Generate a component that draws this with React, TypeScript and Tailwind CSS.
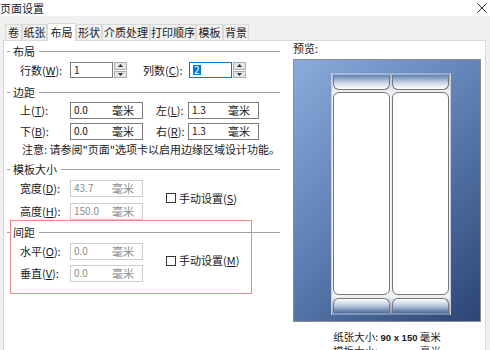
import React from 'react';

const tabs = [
  { name: '卷', w: 'w-[17px]' },
  { name: '纸张', w: 'w-[25px]' },
  { name: '布局', w: 'w-[29px]', active: true },
  { name: '形状', w: 'w-[26px]' },
  { name: '介质处理', w: 'w-[48px]' },
  { name: '打印顺序', w: 'w-[46px]' },
  { name: '模板', w: 'w-[27px]' },
  { name: '背景', w: 'w-[26px]' },
];

const Key: React.FC<{ label: string; k: string; w?: string }> = ({ label, k, w = 'w-[50px]' }) => (
  <span className={`${w} shrink-0`}>
    {label}(<span className="underline">{k}</span>):
  </span>
);

const SectionHead: React.FC<{ title: string; className?: string }> = ({ title, className = '' }) => (
  <div className={`flex items-center h-[14px] w-[276px] ${className}`}>
    <div className="ml-[3px] w-[3px] h-px bg-[#a0a0a0]" />
    <span className="ml-[3px]">{title}</span>
    <div className="flex-1 ml-[4px] h-px bg-[#a0a0a0]" />
  </div>
);

const UnitBox: React.FC<{ value: string; disabled?: boolean; w?: string; valW?: string }> = ({
  value,
  disabled,
  w = 'w-[73px]',
  valW = 'w-[38px]',
}) => (
  <div
    className={`${w} h-[17px] flex items-center pl-[3px] border ${
      disabled ? 'border-[#cccccc] text-[#8c8c8c]' : 'border-[#7a7a7a] text-[#111]'
    } bg-white`}
  >
    <span className={`${valW} text-[10px]`}>{value}</span>
    <span className={disabled ? 'text-[#8c8c8c]' : 'text-[#222]'}>毫米</span>
  </div>
);

const Spin: React.FC = () => (
  <div className="flex flex-col w-[13px] h-[16px] ml-px gap-px">
    <div className="flex-1 border border-[#adadad] bg-[#e5e5e5] flex items-center justify-center">
      <svg width="5" height="3" viewBox="0 0 5 3">
        <path d="M0 3 L2.5 0 L5 3Z" fill="#333" />
      </svg>
    </div>
    <div className="flex-1 border border-[#adadad] bg-[#e5e5e5] flex items-center justify-center">
      <svg width="5" height="3" viewBox="0 0 5 3">
        <path d="M0 0 L2.5 3 L5 0Z" fill="#333" />
      </svg>
    </div>
  </div>
);

const Check: React.FC<{ label: string; k: string }> = ({ label, k }) => (
  <div className="flex items-center ml-[23px]">
    <div className="w-[10px] h-[10px] border border-[#333] bg-white" />
    <span className="ml-[3px]">
      {label}(<span className="underline">{k}</span>)
    </span>
  </div>
);

const Labels: React.FC = () => (
  <div className="flex flex-col w-[57px]">
    <div className="h-[15px] rounded-b-[6px] border border-t-0 border-[#777] bg-[linear-gradient(to_bottom,#5f80b4,#c9d4e6_55%,#ffffff)]" />
    <div className="h-[203px] mt-[2px] rounded-[6px] border border-[#777] bg-white" />
    <div className="h-[15px] mt-[3px] rounded-t-[6px] border border-b-0 border-[#777] bg-[linear-gradient(to_bottom,#ffffff,#b8c6de_50%,#4b6a9c)]" />
  </div>
);

export default function App() {
  return (
    <div className="relative w-[490px] h-[350px] overflow-hidden flex flex-col bg-white text-[11px] leading-none text-[#1a1a1a] font-['Noto_Sans_CJK_SC','Noto_Sans',sans-serif]">
      {/* title bar */}
      <div className="h-[16px] shrink-0 flex items-center justify-between pr-[3px]">
        <span className="text-[11px]">页面设置</span>
        <svg width="10" height="10" viewBox="0 0 10 10">
          <path d="M0.5 0.5 L9.5 9.5 M9.5 0.5 L0.5 9.5" stroke="#222" strokeWidth="1" />
        </svg>
      </div>

      <div className="flex-1 flex flex-col bg-[#f0f0f0] pl-[3px] pr-[4px]">
        {/* tabs */}
        <div className="h-[24px] shrink-0 flex items-end pl-[2px]">
          {tabs.map((t) =>
            t.active ? (
              <div
                key={t.name}
                className={`${t.w} h-[18px] -mb-px z-10 bg-white border border-b-0 border-[#d9d9d9] flex items-center justify-center`}
              >
                {t.name}
              </div>
            ) : (
              <div
                key={t.name}
                className={`${t.w} h-[16px] bg-[#f0f0f0] border border-b-0 border-[#d9d9d9] flex items-center justify-center`}
              >
                {t.name}
              </div>
            )
          )}
        </div>

        {/* page */}
        <div className="flex-1 flex bg-white border-l border-t border-r border-[#d9d9d9]">
          {/* left column */}
          <div className="w-[289px] shrink-0 flex flex-col pt-[3px]">
            <SectionHead title="布局" />
            <div className="mt-[3px] h-[18px] flex items-center pl-[16px]">
              <Key label="行数" k="W" />
              <div className="w-[43px] h-[16px] border border-[#7a7a7a] flex items-center pl-[3px] text-[10px]">1</div>
              <Spin />
              <Key label="列数" k="C" w="w-[46px] ml-[16px]" />
              <div className="w-[43px] h-[16px] border border-[#0078d7] flex items-center pl-[3px] text-[10px]">
                <span className="bg-[#0078d7] text-white px-px">2</span>
              </div>
              <Spin />
            </div>

            <SectionHead title="边距" className="mt-[6px]" />
            <div className="mt-[2px] h-[18px] flex items-center pl-[16px]">
              <Key label="上" k="T" />
              <UnitBox value="0.0" />
              <Key label="左" k="L" w="w-[32px] ml-[13px]" />
              <UnitBox value="1.3" w="w-[71px]" valW="w-[36px]" />
            </div>
            <div className="mt-[3px] h-[18px] flex items-center pl-[16px]">
              <Key label="下" k="B" />
              <UnitBox value="0.0" />
              <Key label="右" k="R" w="w-[32px] ml-[13px]" />
              <UnitBox value="1.3" w="w-[71px]" valW="w-[36px]" />
            </div>
            <div className="mt-[2px] h-[14px] flex items-center pl-[18px]">
              注意: 请参阅"页面"选项卡以启用边缘区域设计功能。
            </div>

            <SectionHead title="模板大小" className="mt-[6px]" />
            <div className="flex items-center">
              <div className="flex flex-col pl-[16px]">
                <div className="mt-[3px] h-[18px] flex items-center">
                  <Key label="宽度" k="D" />
                  <UnitBox value="43.7" disabled />
                </div>
                <div className="mt-[5px] h-[18px] flex items-center">
                  <Key label="高度" k="H" />
                  <UnitBox value="150.0" disabled />
                </div>
              </div>
              <Check label="手动设置" k="S" />
            </div>

            <SectionHead title="间距" className="mt-[5px]" />
            <div className="flex items-center">
              <div className="flex flex-col pl-[16px]">
                <div className="mt-[3px] h-[18px] flex items-center">
                  <Key label="水平" k="O" />
                  <UnitBox value="0.0" disabled />
                </div>
                <div className="mt-[4px] h-[18px] flex items-center">
                  <Key label="垂直" k="V" />
                  <UnitBox value="0.0" disabled />
                </div>
              </div>
              <Check label="手动设置" k="M" />
            </div>
          </div>

          {/* right column: preview */}
          <div className="w-[188px] shrink-0 flex flex-col">
            <div className="h-[14px] flex items-center">预览:</div>
            <div className="mt-[4px] h-[263px] border border-[#8c8c8c] bg-[linear-gradient(135deg,#8aabdb,#5b7cb0_50%,#2b4574)] flex flex-col">
              <div className="mt-[13px] ml-[37px] w-[120px] px-px pt-[2px] pb-[2px] border-x border-[#c9ced8] bg-[linear-gradient(to_bottom,rgba(240,242,246,0.3),#eef0f4_18px,#eef0f4_calc(100%-18px),rgba(240,242,246,0.3))] flex justify-center gap-[2px]">
                <Labels />
                <Labels />
              </div>
            </div>
            <div className="mt-[9px] h-[13px] flex items-center justify-center text-[10.5px]">
              纸张大小:&nbsp;<span className="font-['Liberation_Sans'] font-bold text-[9.5px]">90 x 150</span>&nbsp;毫米
            </div>
            <div className="mt-[2px] h-[14px] flex items-start pl-[40px] gap-[42px] text-[10.5px] text-[#333]">
              <span>模板大小:</span>
              <span>毫米</span>
            </div>
          </div>
        </div>
      </div>

      {/* annotation frame */}
      <div className="absolute left-[10px] top-[220px] w-[242px] h-[74px] border-[1.5px] border-[#ef8a8a] pointer-events-none" />
    </div>
  );
}
